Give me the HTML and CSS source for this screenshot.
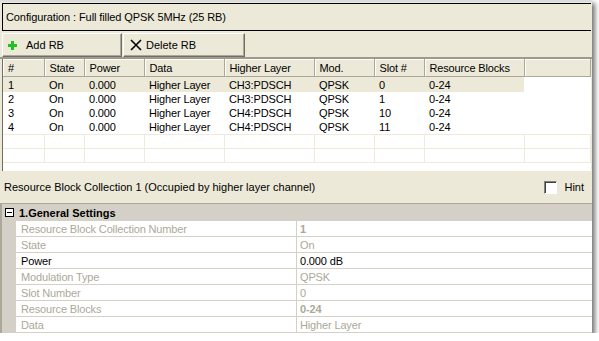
FILE: index.html
```html
<!DOCTYPE html>
<html>
<head>
<meta charset="utf-8">
<link rel="stylesheet" href="styles.css">
</head>
<body>
<div class="window">
  <div class="config">Configuration : Full filled QPSK 5MHz (25 RB)</div>
  <div class="toolbar">
    <button class="btn btn-add"><svg width="9" height="9" viewBox="0 0 9 9"><path d="M3 0h3v3h3v3h-3v3h-3v-3h-3v-3h3z" fill="#1fc21f"/></svg><span>Add RB</span></button>
    <button class="btn btn-del"><svg width="12" height="12" viewBox="0 0 12 12"><path d="M1 1L11 11M11 1L1 11" stroke="#000" stroke-width="1.6" fill="none"/></svg><span>Delete RB</span></button>
  </div>
  <div class="tablewrap">
    <table class="grid">
      <colgroup>
        <col style="width:41px"><col style="width:40px"><col style="width:60px"><col style="width:80px"><col style="width:90px"><col style="width:60px"><col style="width:50px"><col style="width:100px"><col>
      </colgroup>
      <thead>
        <tr><th>#</th><th>State</th><th>Power</th><th>Data</th><th>Higher Layer</th><th>Mod.</th><th>Slot #</th><th>Resource Blocks</th><th></th></tr>
      </thead>
      <tbody>
        <tr class="sel"><td>1</td><td>On</td><td>0.000</td><td>Higher Layer</td><td>CH3:PDSCH</td><td>QPSK</td><td>0</td><td>0-24</td><td class="blank"></td></tr>
        <tr><td>2</td><td>On</td><td>0.000</td><td>Higher Layer</td><td>CH3:PDSCH</td><td>QPSK</td><td>1</td><td>0-24</td><td></td></tr>
        <tr><td>3</td><td>On</td><td>0.000</td><td>Higher Layer</td><td>CH4:PDSCH</td><td>QPSK</td><td>10</td><td>0-24</td><td></td></tr>
        <tr><td>4</td><td>On</td><td>0.000</td><td>Higher Layer</td><td>CH4:PDSCH</td><td>QPSK</td><td>11</td><td>0-24</td><td></td></tr>
        <tr class="empty"><td></td><td></td><td></td><td></td><td></td><td></td><td></td><td></td><td></td></tr>
        <tr class="empty"><td></td><td></td><td></td><td></td><td></td><td></td><td></td><td></td><td></td></tr>
      </tbody>
    </table>
  </div>
  <div class="labelbar">
    <span>Resource Block Collection 1 (Occupied by higher layer channel)</span>
    <label class="hint"><span class="check"></span><span>Hint</span></label>
  </div>
  <div class="props">
    <div class="cat"><span class="toggle"><svg width="9" height="9" viewBox="0 0 9 9"><rect x="0.5" y="0.5" width="8" height="8" fill="#fff" stroke="#000"/><path d="M2 4.5h5" stroke="#000"/></svg></span><span class="cat-title">1.General Settings</span></div>
    <div class="prow"><span class="pl dis">Resource Block Collection Number</span><span class="pv dis b">1</span></div>
    <div class="prow"><span class="pl dis">State</span><span class="pv dis">On</span></div>
    <div class="prow"><span class="pl">Power</span><span class="pv">0.000 dB</span></div>
    <div class="prow"><span class="pl dis">Modulation Type</span><span class="pv dis">QPSK</span></div>
    <div class="prow"><span class="pl dis">Slot Number</span><span class="pv dis">0</span></div>
    <div class="prow"><span class="pl dis">Resource Blocks</span><span class="pv dis b">0-24</span></div>
    <div class="prow"><span class="pl dis">Data</span><span class="pv dis">Higher Layer</span></div>
  </div>
</div>
</body>
</html>
```

FILE: styles.css
```css
html, body {
  margin: 0;
  padding: 0;
  background: #ffffff;
}
body {
  font-family: "Liberation Sans", Arial, sans-serif;
  font-size: 11px;
  color: #000;
}
.window {
  width: 592px;
  height: 333px;
  background: #ECE9D8;
  box-shadow: 3px 3px 5px rgba(0, 0, 0, 0.55);
  display: flex;
  flex-direction: column;
  border-top: 2px solid #dcdcdc;
  box-sizing: border-box;
}
.config {
  margin: 1px 1px 0 2px;
  height: 26px;
  flex: none;
  border-top: 1px solid #000;
  border-left: 1px solid #000;
  border-bottom: 1px solid #000;
  display: flex;
  align-items: center;
  padding-left: 3px;
  font-size: 11px;
  letter-spacing: -0.1px;
}
.toolbar {
  display: flex;
  flex: none;
  padding: 2px 0 0 2px;
  height: 24px;
  border-bottom: 2px solid #9d9a8c;
  box-sizing: content-box;
}
.btn {
  height: 24px;
  margin: 0 1px 0 0;
  padding: 0;
  background: #ECE9D8;
  border: 1px solid;
  border-color: #fff #716f64 #716f64 #fff;
  box-shadow: inset -1px -1px 0 #aca899;
  display: flex;
  align-items: center;
  font-family: inherit;
  font-size: 11px;
  color: #000;
}
.btn-add { width: 120px; padding-left: 5px; }
.btn-add svg { margin-right: 9px; }
.btn-del { width: 122px; padding-left: 6px; }
.btn-del svg { margin-right: 4px; }
.tablewrap {
  margin: 0 1px 0 2px;
  height: 112px;
  flex: none;
  background: #fff;
  border-left: 1px solid #716f64;
  overflow: hidden;
}
.grid {
  width: 100%;
  table-layout: fixed;
  border-collapse: collapse;
  font-size: 11px;
  letter-spacing: -0.15px;
}
.grid th {
  height: 17px;
  padding: 0 0 0 5px;
  text-align: left;
  font-weight: normal;
  background: #ECE9D8;
  border-right: 1px solid #aca899;
  border-bottom: 1px solid #aca899;
  box-shadow: inset 1px 1px 0 #fff;
  white-space: nowrap;
  overflow: hidden;
}
.grid td {
  height: 14px;
  padding: 0 0 0 5px;
  white-space: nowrap;
  overflow: hidden;
  line-height: 14px;
}
.grid tr.sel td { background: #ECE9D8; height: 15px; }
.grid tr.sel td.blank { background: #fff; }
.grid tr.empty td {
  border-right: 1px solid #efebdc;
  border-top: 1px solid #efebdc;
  border-bottom: 1px solid #efebdc;
  height: 13px;
}
.labelbar {
  height: 32px;
  flex: none;
  display: flex;
  align-items: center;
  justify-content: space-between;
  padding: 0 8px 0 4px;
  font-size: 11px;
  border-bottom: 1px solid #aca899;
}
.hint {
  display: flex;
  align-items: center;
}
.check {
  width: 11px;
  height: 11px;
  border: 1px solid;
  border-color: #808080 #fff #fff #808080;
  box-shadow: inset 1px 1px 0 #404040;
  background: #fff;
  margin-right: 7px;
}
.props {
  flex: 1;
  background: #fff;
  border-left: 2px solid #aca899;
  font-size: 11px;
  letter-spacing: -0.15px;
  display: flex;
  flex-direction: column;
}
.cat {
  height: 17px;
  background: #D4D0C8;
  display: flex;
  align-items: center;
  flex: none;
}
.toggle {
  width: 17px;
  display: flex;
  padding-left: 3px;
  box-sizing: border-box;
}
.cat-title {
  font-weight: bold;
  letter-spacing: 0;
}
.prow {
  height: 16px;
  display: flex;
  flex: none;
  border-left: 14px solid #D4D0C8;
  box-sizing: border-box;
}
.pl, .pv {
  border-bottom: 1px solid #D4D0C8;
  display: flex;
  align-items: center;
}
.pl {
  width: 281px;
  padding-left: 5px;
  box-sizing: border-box;
  border-right: 1px solid #D4D0C8;
  flex: none;
}
.pv {
  flex: 1;
  padding-left: 3px;
}
.dis { color: #aca899; }
.b { font-weight: bold; }
```
